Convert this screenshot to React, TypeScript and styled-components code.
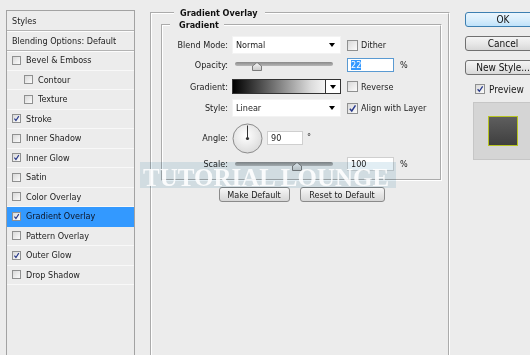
import React from "react";
import styled, { createGlobalStyle } from "styled-components";

const Global = createGlobalStyle`
  html, body { margin: 0; padding: 0; background: #ececec; }
  body {
    font-family: "DejaVu Sans Condensed", "DejaVu Sans", "Liberation Sans", sans-serif;
    font-size: 9px;
    color: #1c1c1c;
  }
`;

const Window = styled.div`
  position: relative;
  width: 530px;
  height: 355px;
  overflow: hidden;
  display: flex;
  align-items: flex-start;
  background: #ececec;
`;

/* ---------- left styles list ---------- */
const StylesPanel = styled.div`
  flex: none;
  margin: 10px 0 0 6px;
  width: 129px;
  height: 360px;
  box-sizing: border-box;
  border: 1px solid #a2a2a2;
  display: flex;
  flex-direction: column;
`;

const PanelHead = styled.div`
  flex: none;
  height: 20px;
  box-sizing: border-box;
  display: flex;
  align-items: center;
  padding-left: 5px;
  border-bottom: 1px solid #b3b3b3;
  box-shadow: 0 1px 0 #fcfcfc;
`;

const StyleRow = styled.div<{ $selected?: boolean; $depth?: number }>`
  flex: none;
  height: 19.5px;
  box-sizing: border-box;
  display: flex;
  align-items: center;
  gap: 5px;
  padding-left: ${(p) => (p.$depth ? 17 : 5)}px;
  border-bottom: 1px solid ${(p) => (p.$selected ? "#3399ff" : "#f8f8f8")};
  background: ${(p) => (p.$selected ? "#3399ff" : "transparent")};
  color: ${(p) => (p.$selected ? "#0d1424" : "#1c1c1c")};
`;

/* ---------- checkbox ---------- */
const Box = styled.span<{ $size: number }>`
  flex: none;
  display: inline-flex;
  align-items: center;
  justify-content: center;
  width: ${(p) => p.$size}px;
  height: ${(p) => p.$size}px;
  box-sizing: border-box;
  border: 1px solid #8f9090;
  background: linear-gradient(135deg, #d9d9d9, #fbfbfb);
`;

function CheckBox({ size, checked }: { size: number; checked?: boolean }) {
  return (
    <Box $size={size}>
      {checked && (
        <svg width={size - 2} height={size - 2} viewBox="0 0 10 10">
          <path d="M2 5.3 L4.2 7.8 L8.3 1.6" fill="none" stroke="#27388a" strokeWidth="1.6" />
        </svg>
      )}
    </Box>
  );
}

/* ---------- middle fieldsets ---------- */
const MiddleColumn = styled.div`
  flex: none;
  margin: 7px 0 0 15px;
  display: flex;
  flex-direction: column;
`;

const OuterFieldset = styled.fieldset`
  margin: 0;
  min-width: 0;
  width: 300px;
  height: 360px;
  box-sizing: border-box;
  padding: 0 6px 0 9px;
  border: 2px groove #ffffff;
  display: flex;
  flex-direction: column;
`;

const Legend = styled.legend<{ $inset: number; $pl: number; $pr: number }>`
  margin-left: ${(p) => p.$inset}px;
  padding: 0 ${(p) => p.$pr}px 0 ${(p) => p.$pl}px;
  font-weight: bold;
  font-size: 9px;
  line-height: 12px;
  color: #111;
`;

const InnerFieldset = styled.fieldset`
  margin: 0;
  min-width: 0;
  padding: 5px 0 8px 0;
  border: 2px groove #ffffff;
  display: flex;
  flex-direction: column;
`;

const Row = styled.div<{ $top: number; $h: number }>`
  display: flex;
  align-items: center;
  margin-top: ${(p) => p.$top}px;
  height: ${(p) => p.$h}px;
`;

const Label = styled.span`
  flex: none;
  width: 65px;
  margin-right: 4px;
  text-align: right;
`;

const Control = styled.div`
  flex: none;
  width: 109px;
  display: flex;
  align-items: center;
`;

const Side = styled.div`
  display: flex;
  align-items: center;
  gap: 3px;
  margin-left: 6px;
`;

const Select = styled.div`
  width: 109px;
  height: 18px;
  box-sizing: border-box;
  background: #fff;
  border: 1px solid #f3f3f3;
  display: flex;
  align-items: center;
  justify-content: space-between;
  padding: 0 5px 0 3px;
`;

const Arrow = styled.span`
  width: 0;
  height: 0;
  border-left: 3.5px solid transparent;
  border-right: 3.5px solid transparent;
  border-top: 4px solid #000;
`;

const SliderWrap = styled.div`
  position: relative;
  margin-left: 3px;
  width: 98px;
  height: 15px;
`;

const Track = styled.div`
  margin-top: 5px;
  height: 4px;
  border-radius: 2px;
  background: linear-gradient(#8a8a8a, #b8b8b8);
`;

const Thumb = styled.svg`
  position: absolute;
  top: 5px;
`;

function Slider({ pos }: { pos: number }) {
  return (
    <SliderWrap>
      <Track />
      <Thumb width="10" height="9" viewBox="0 0 10 9" style={{ left: `${pos * 98 - 5}px` }}>
        <defs>
          <linearGradient id="tg" x1="0" y1="0" x2="0" y2="1">
            <stop offset="0" stopColor="#f6f6f6" />
            <stop offset="1" stopColor="#c9c9c9" />
          </linearGradient>
        </defs>
        <path d="M5 0.5 L9.5 4 L9.5 8.5 L0.5 8.5 L0.5 4 Z" fill="url(#tg)" stroke="#7b7b7b" strokeWidth="1" />
      </Thumb>
    </SliderWrap>
  );
}

const NumInput = styled.div<{ $w: number; $focus?: boolean }>`
  flex: none;
  width: ${(p) => p.$w}px;
  height: 14px;
  box-sizing: border-box;
  background: #fff;
  border: 1px solid ${(p) => (p.$focus ? "#5a9ad2" : "#cfcfcf")};
  display: flex;
  align-items: center;
  padding-left: 3px;
`;

const Selected = styled.span`
  background: #3399ff;
  color: #fff;
  line-height: 10px;
`;

const Unit = styled.span`
  margin-left: 3px;
`;

const GradientBar = styled.div`
  width: 109px;
  height: 15px;
  box-sizing: border-box;
  border: 1px solid #333;
  display: flex;
`;

const GradientFill = styled.div`
  flex: 1;
  background: linear-gradient(to right, #000 0%, #5a5a5a 35%, #dcdcdc 85%, #f4f4f4 100%);
`;

const GradientDrop = styled.div`
  flex: none;
  width: 14px;
  border-left: 1px solid #333;
  background: #fff;
  display: flex;
  align-items: center;
  justify-content: center;
`;

const AngleGroup = styled.div`
  display: flex;
  align-items: center;
`;

const Degree = styled.span`
  margin-left: 4px;
  align-self: flex-start;
  margin-top: 9px;
`;

const ButtonRow = styled.div`
  display: flex;
  justify-content: center;
  gap: 10px;
  margin-top: 6px;
`;

const SmallButton = styled.div<{ $w: number }>`
  width: ${(p) => p.$w}px;
  height: 15px;
  box-sizing: border-box;
  border: 1px solid #8a8a8a;
  border-radius: 3px;
  background: linear-gradient(#f7f7f7, #e6e6e6 50%, #d6d6d6);
  display: flex;
  align-items: center;
  justify-content: center;
`;

/* ---------- right column ---------- */
const RightColumn = styled.div`
  flex: none;
  margin: 12px 0 0 15px;
  width: 76px;
  display: flex;
  flex-direction: column;
  gap: 9px;
  font-size: 10px;
`;

const DialogButton = styled.div<{ $primary?: boolean }>`
  height: 15px;
  box-sizing: border-box;
  border: 1px solid ${(p) => (p.$primary ? "#3c7fb1" : "#707070")};
  border-radius: 3px;
  background: ${(p) =>
    p.$primary
      ? "linear-gradient(#eaf5fd, #d9eefc 50%, #bfe2fa)"
      : "linear-gradient(#f4f4f4, #e8e8e8 50%, #d8d8d8)"};
  display: flex;
  align-items: center;
  justify-content: center;
  white-space: nowrap;
  color: #111;
`;

const PreviewToggle = styled.div`
  display: flex;
  align-items: center;
  gap: 4px;
  padding-left: 10px;
  margin-top: -1px;
  height: 12px;
`;

const PreviewBox = styled.div`
  margin: -2px 0 0 8px;
  width: 60px;
  height: 58px;
  box-sizing: border-box;
  background: #d5d5d5;
  border: 1px solid #c6c6c6;
  display: flex;
  align-items: center;
  justify-content: center;
`;

const Swatch = styled.div`
  width: 30px;
  height: 30px;
  box-sizing: border-box;
  border: 1px solid #b7c421;
  background: linear-gradient(#5e5e5e, #3f3f3f);
`;

/* ---------- watermark ---------- */
const Watermark = styled.div`
  position: absolute;
  left: 140px;
  top: 162px;
  width: 256px;
  height: 26px;
  display: flex;
  align-items: flex-end;
  padding-left: 3px;
  box-sizing: border-box;
  pointer-events: none;
`;

const WatermarkBand = styled.div`
  position: absolute;
  inset: 0;
  background: #e2eef4;
  mix-blend-mode: multiply;
`;

const WatermarkText = styled.span`
  position: relative;
  font-family: "Liberation Serif", serif;
  font-weight: bold;
  font-size: 25px;
  line-height: 25px;
  margin-bottom: -2px;
  color: rgba(255, 255, 255, 0.88);
  white-space: nowrap;
`;

const styleItems: { name: string; checked?: boolean; depth?: number; selected?: boolean }[] = [
  { name: "Bevel & Emboss" },
  { name: "Contour", depth: 1 },
  { name: "Texture", depth: 1 },
  { name: "Stroke", checked: true },
  { name: "Inner Shadow" },
  { name: "Inner Glow", checked: true },
  { name: "Satin" },
  { name: "Color Overlay" },
  { name: "Gradient Overlay", checked: true, selected: true },
  { name: "Pattern Overlay" },
  { name: "Outer Glow", checked: true },
  { name: "Drop Shadow" },
];

export default function App() {
  return (
    <>
      <Global />
      <Window>
        <StylesPanel>
          <PanelHead>Styles</PanelHead>
          <PanelHead>Blending Options: Default</PanelHead>
          {styleItems.map((it) => (
            <StyleRow key={it.name} $depth={it.depth} $selected={it.selected}>
              <CheckBox size={9} checked={it.checked} />
              <span>{it.name}</span>
            </StyleRow>
          ))}
        </StylesPanel>

        <MiddleColumn>
          <OuterFieldset>
            <Legend $inset={13} $pl={6} $pr={7}>Gradient Overlay</Legend>
            <InnerFieldset>
              <Legend $inset={7} $pl={9} $pr={5}>Gradient</Legend>

              <Row $top={0} $h={18}>
                <Label>Blend Mode:</Label>
                <Control>
                  <Select>
                    <span>Normal</span>
                    <Arrow />
                  </Select>
                </Control>
                <Side>
                  <CheckBox size={11} />
                  <span>Dither</span>
                </Side>
              </Row>

              <Row $top={3} $h={15}>
                <Label>Opacity:</Label>
                <Control>
                  <Slider pos={0.22} />
                </Control>
                <Side>
                  <NumInput $w={47} $focus>
                    <Selected>22</Selected>
                  </NumInput>
                  <Unit>%</Unit>
                </Side>
              </Row>

              <Row $top={7} $h={15}>
                <Label>Gradient:</Label>
                <Control>
                  <GradientBar>
                    <GradientFill />
                    <GradientDrop>
                      <Arrow />
                    </GradientDrop>
                  </GradientBar>
                </Control>
                <Side>
                  <CheckBox size={11} />
                  <span>Reverse</span>
                </Side>
              </Row>

              <Row $top={5} $h={18}>
                <Label>Style:</Label>
                <Control>
                  <Select>
                    <span>Linear</span>
                    <Arrow />
                  </Select>
                </Control>
                <Side>
                  <CheckBox size={11} checked />
                  <span>Align with Layer</span>
                </Side>
              </Row>

              <Row $top={6} $h={30}>
                <Label>Angle:</Label>
                <AngleGroup>
                  <svg width="31" height="31" viewBox="0 0 31 31">
                    <defs>
                      <radialGradient id="dialg" cx="0.45" cy="0.4" r="0.6">
                        <stop offset="0" stopColor="#ffffff" />
                        <stop offset="1" stopColor="#dcdcdc" />
                      </radialGradient>
                    </defs>
                    <circle cx="15.5" cy="15.5" r="14.5" fill="url(#dialg)" stroke="#8c8c8c" strokeWidth="1" />
                    <line x1="15.5" y1="15.5" x2="15.5" y2="2.5" stroke="#333" strokeWidth="1" />
                    <circle cx="15.5" cy="15.5" r="1.6" fill="#333" />
                  </svg>
                  <NumInput $w={36} style={{ marginLeft: "4px" }}>90</NumInput>
                  <Degree>°</Degree>
                </AngleGroup>
              </Row>

              <Row $top={4} $h={14}>
                <Label>Scale:</Label>
                <Control>
                  <Slider pos={0.63} />
                </Control>
                <Side>
                  <NumInput $w={47}>100</NumInput>
                  <Unit>%</Unit>
                </Side>
              </Row>
            </InnerFieldset>

            <ButtonRow>
              <SmallButton $w={71}>Make Default</SmallButton>
              <SmallButton $w={85}>Reset to Default</SmallButton>
            </ButtonRow>
          </OuterFieldset>
        </MiddleColumn>

        <RightColumn>
          <DialogButton $primary>OK</DialogButton>
          <DialogButton>Cancel</DialogButton>
          <DialogButton>New Style...</DialogButton>
          <PreviewToggle>
            <CheckBox size={10} checked />
            <span>Preview</span>
          </PreviewToggle>
          <PreviewBox>
            <Swatch />
          </PreviewBox>
        </RightColumn>

        <Watermark>
          <WatermarkBand />
          <WatermarkText>TUTORIAL LOUNGE</WatermarkText>
        </Watermark>
      </Window>
    </>
  );
}
